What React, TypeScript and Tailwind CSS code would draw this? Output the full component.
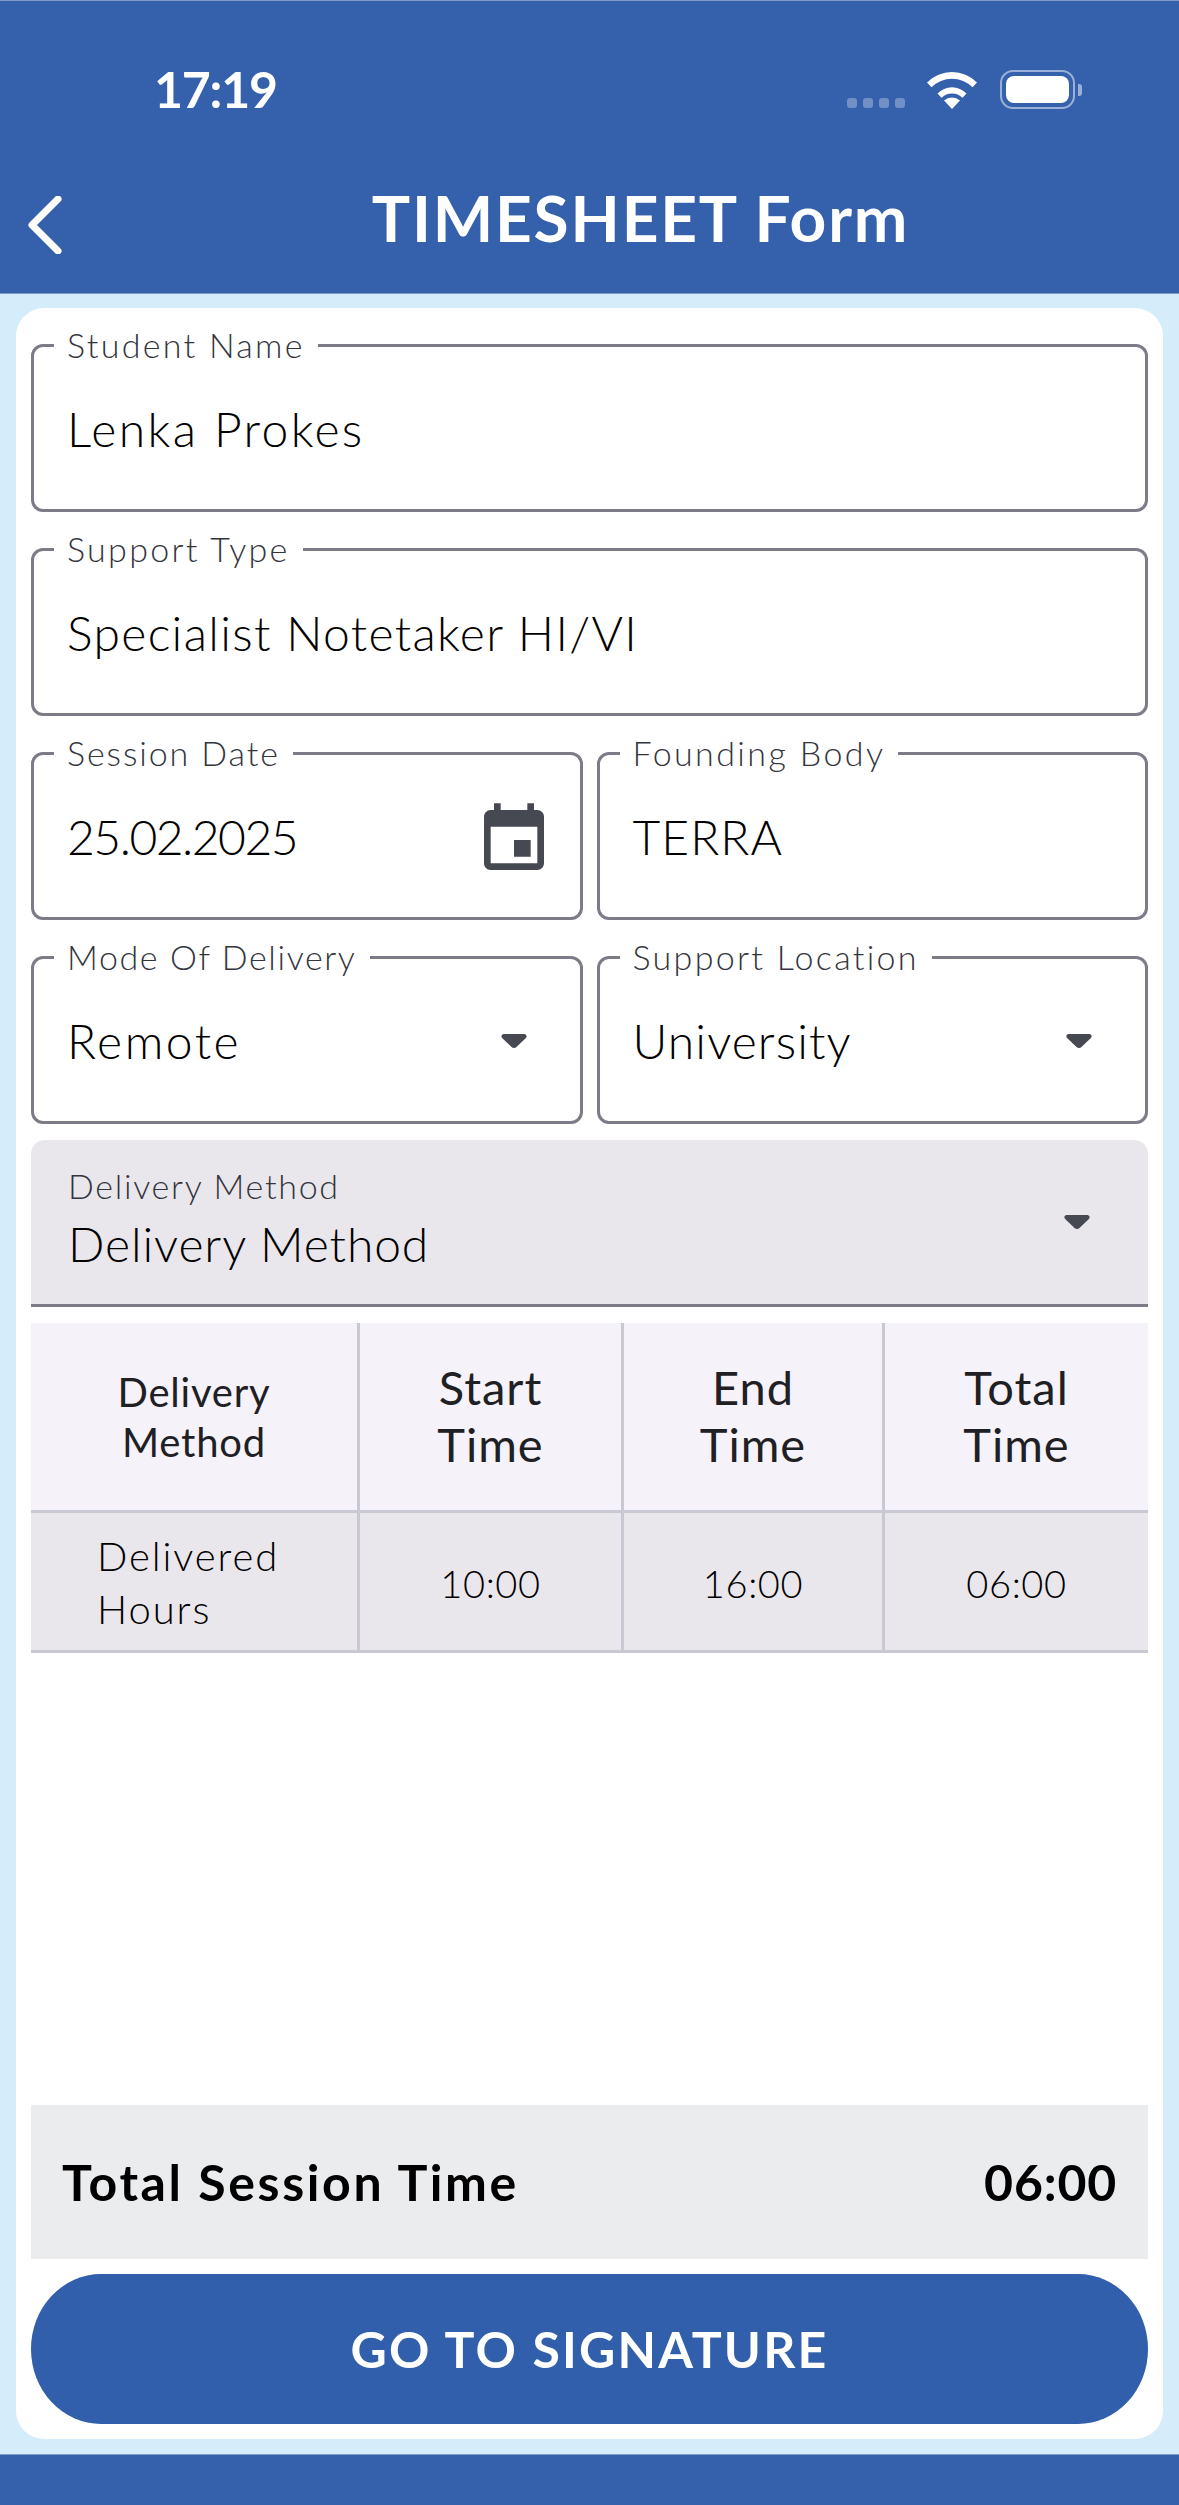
const FONT = "font-['Lato','Noto_Sans',sans-serif]";

function Arrow() {
  return (
    <svg width="28" height="18" viewBox="0 0 28 18" className="shrink-0">
      <path d="M4 2h20c2.400 0 3.400 2.300 1.900 3.900l-9.700 9.300c-1.200 1.100-3.200 1.100-4.400 0L2.100 5.900C.6 4.300 1.600 2 4 2z" fill="#464852" />
    </svg>
  );
}

function Calendar() {
  return (
    <svg width="80" height="80" viewBox="0 0 24 24" className="mt-[5px] shrink-0">
      <path
        fill="#464852"
        d="M17 12h-5v5h5v-5zM16 1v2H8V1H6v2H5c-1.110 0-1.990.9-1.990 2L3 19c0 1.100.89 2 2 2h14c1.100 0 2-.9 2-2V5c0-1.100-.9-2-2-2h-1V1h-2zm3 18H5V8h14v11z"
      />
    </svg>
  );
}

function Field({
  label,
  value,
  icon,
  arrow,
  track,
  labelTrack = "tracking-[2.100px]",
}: {
  label: string;
  value: string;
  icon?: boolean;
  arrow?: boolean;
  track: string;
  labelTrack?: string;
}) {
  return (
    <fieldset className="h-[187px] min-w-0 rounded-[12px] border-[3px] border-[#7b7c88] pl-[33px] pr-[26px]">
      <legend className={`-ml-[13px] h-[40px] px-[13px] text-[34px] leading-[40px] font-light text-[#33353d] ${labelTrack}`}>{label}</legend>
      <div className="flex h-[128px] items-center justify-between">
        <span className={`text-[48px] font-light text-black ${track}`}>{value}</span>
        {icon && <Calendar />}
        {arrow && <span className="mr-[26px] flex"><Arrow /></span>}
      </div>
    </fieldset>
  );
}

const head = [
  ["Start", "Time"],
  ["End", "Time"],
  ["Total", "Time"],
];
const vals = ["10:00", "16:00", "06:00"];

export default function App() {
  return (
    <div className={`flex h-[2505px] w-[1179px] flex-col bg-[#d5ecfb] ${FONT}`}>
      <header className="flex h-[294px] shrink-0 flex-col border-y border-y-[#7f9bc9] bg-[#3460ac] text-white">
        <div className="flex h-[177px] items-center pl-[154px] pr-[97px]">
          <span className="flex-1 text-[50px] font-bold tracking-[-1.200px]">17:19</span>
          <div className="flex items-center">
            <div className="mr-[22px] mt-[26px] flex gap-[6px]">
              <span className="h-[10px] w-[10px] rounded-[3px] bg-white/30" />
              <span className="h-[10px] w-[10px] rounded-[3px] bg-white/30" />
              <span className="h-[10px] w-[10px] rounded-[3px] bg-white/30" />
              <span className="h-[10px] w-[10px] rounded-[3px] bg-white/30" />
            </div>
            <svg width="50" height="38" viewBox="0 0 50 38" className="mr-[23px]">
              <path d="M25 38 17 29.500a12 12 0 0 1 16 0z" fill="#fff" />
              <path d="M10.500 22.500a20 20 0 0 1 29 0l-4 4.300a15 15 0 0 0-21 0z" fill="#fff" />
              <path d="M0 11.500a35 35 0 0 1 50 0l-4.500 4.800a29 29 0 0 0-41 0z" fill="#fff" />
            </svg>
            <div className="flex items-center gap-[3px]">
              <div className="flex h-[39px] w-[75px] items-center justify-center rounded-[13px] border-[2px] border-white/50">
                <div className="h-[27px] w-[63px] rounded-[8px] bg-white" />
              </div>
              <div className="h-[12px] w-[4px] rounded-r-[3px] bg-white/50" />
            </div>
          </div>
        </div>
        <div className="flex h-[86px] items-center pl-[28px]">
          <svg width="34" height="58" viewBox="0 0 34 58" className="mt-[8px]">
            <path d="M30 3 4 29l26 26" fill="none" stroke="#fff" strokeWidth="7" strokeLinecap="round" strokeLinejoin="round" />
          </svg>
          <h1 className="flex-1 pb-[6px] pl-[40px] text-center text-[64px] leading-[70px] font-bold tracking-[1.800px]">TIMESHEET Form</h1>
        </div>
      </header>

      <main className="flex flex-1 flex-col px-[16px] pt-[14px] pb-[15px]">
        <div className="flex flex-1 flex-col gap-[17px] rounded-[28px] bg-white px-[15px] pt-[17px] pb-[15px]">
          <Field label="Student Name" value="Lenka Prokes" track="tracking-[2.400px]" labelTrack="tracking-[2.300px]" />
          <Field label="Support Type" value="Specialist Notetaker HI/VI" track="tracking-[1.350px]" labelTrack="tracking-[2.300px]" />
          <div className="grid grid-cols-2 gap-[14px]">
            <Field label="Session Date" value="25.02.2025" icon track="tracking-[-1.500px]" labelTrack="tracking-[1.900px]" />
            <Field label="Founding Body" value="TERRA" track="tracking-[1px]" labelTrack="tracking-[2.400px]" />
          </div>
          <div className="grid grid-cols-2 gap-[14px]">
            <Field label="Mode Of Delivery" value="Remote" arrow track="tracking-[2.500px]" labelTrack="tracking-[1.600px]" />
            <Field label="Support Location" value="University" arrow track="tracking-[1.100px]" labelTrack="tracking-[2.300px]" />
          </div>
          <div className="-mt-[1px] flex h-[167px] items-center justify-between rounded-t-[14px] border-b-[3px] border-b-[#7b7c88] bg-[#e9e7ec] pl-[37px] pr-[57px]">
            <div className="flex flex-col">
              <span className="-mt-[10px] text-[34px] leading-[40px] font-light tracking-[1.700px] text-[#33353d]">Delivery Method</span>
              <span className="mt-[9px] h-[54px] text-[48px] leading-[58px] font-light tracking-[0.900px] text-black">Delivery Method</span>
            </div>
            <span className="flex"><Arrow /></span>
          </div>

          <div className="-mt-[1px] grid h-[330px] grid-cols-[329px_264px_261px_263px] grid-rows-[190px_140px] text-[#1f2024]">
            <div className="flex items-center justify-center border-r-[3px] border-b-[3px] border-[#c9c9d3] bg-[#f5f3f9] text-center text-[40px] leading-[50px] tracking-[0.800px]">
              Delivery<br />Method
            </div>
            {head.map((h, i) => (
              <div
                key={h[0]}
                className={`flex items-center justify-center border-b-[3px] border-[#c9c9d3] bg-[#f5f3f9] pb-[1px] text-center text-[47px] leading-[57px] tracking-[1px] ${i < 2 ? "border-r-[3px]" : ""}`}
              >
                {h[0]}<br />{h[1]}
              </div>
            ))}
            <div className="flex items-center border-r-[3px] border-b-[3px] border-[#c9c9d3] bg-[#e9e7ec] pl-[66px] pt-[3px] text-[40px] leading-[53px] font-light tracking-[1.900px] text-black">
              Delivered<br />Hours
            </div>
            {vals.map((v, i) => (
              <div
                key={v}
                className={`flex items-center justify-center border-b-[3px] border-[#c9c9d3] bg-[#e9e7ec] pt-[3px] text-[38px] font-light tracking-[0.600px] text-black ${i < 2 ? "border-r-[3px]" : ""}`}
              >
                {v}
              </div>
            ))}
          </div>

          <div className="flex-1" />

          <div className="flex h-[154px] items-center justify-between bg-[#ebecee] px-[31px] text-[50px] font-bold text-black">
            <span className="tracking-[2.600px]">Total Session Time</span>
            <span className="tracking-[0.800px]">06:00</span>
          </div>
          <button className="-mt-[2px] flex h-[150px] items-center justify-center rounded-[70px/75px] bg-[#315fab] text-[50px] font-bold tracking-[2.200px] text-white">
            GO TO SIGNATURE
          </button>
        </div>
      </main>

      <div className="h-[51px] shrink-0 border-t border-t-[#7f9bc9] bg-[#3460ac]" />
    </div>
  );
}
